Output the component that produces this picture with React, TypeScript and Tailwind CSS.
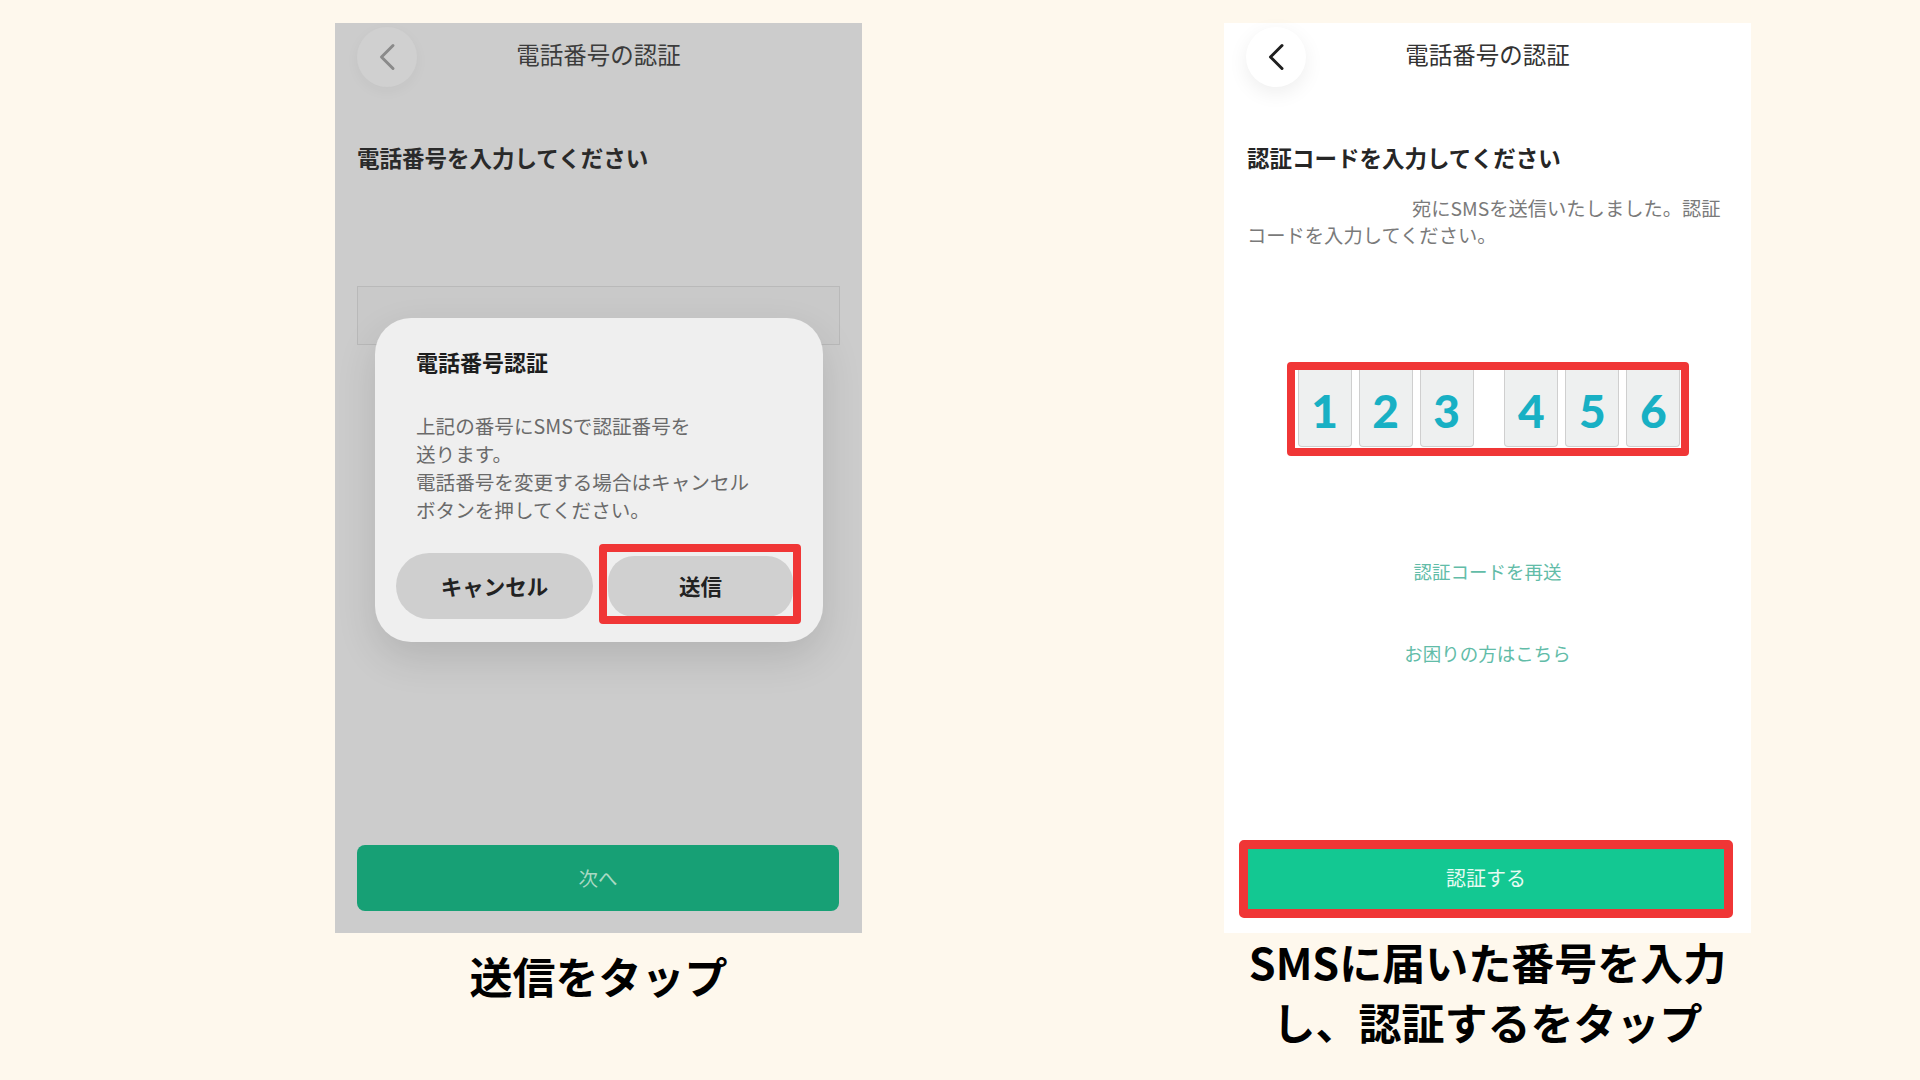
const jp = "font-['Noto_Sans_CJK_JP','Noto_Sans',sans-serif]";

function BackButton({ dimmed }: { dimmed?: boolean }) {
  return (
    <div
      className={
        dimmed
          ? 'flex h-[60px] w-[60px] items-center justify-center rounded-full bg-[#d0d0d0] shadow-[0_4px_14px_rgba(0,0,0,0.04)]'
          : 'flex h-[60px] w-[60px] items-center justify-center rounded-full bg-white shadow-[0_6px_20px_rgba(0,0,0,0.07)]'
      }
    >
      <svg width="18" height="28" viewBox="0 0 18 28" fill="none">
        <path
          d="M15 2.5 L3.5 14 L15 25.5"
          stroke={dimmed ? '#8a8a8a' : '#1f1f1f'}
          strokeWidth="3"
          strokeLinecap="round"
          strokeLinejoin="round"
        />
      </svg>
    </div>
  );
}

function Header({ dimmed }: { dimmed?: boolean }) {
  return (
    <div className="relative flex h-[64px] items-center px-[22px] pt-[3px]">
      <BackButton dimmed={dimmed} />
      <div
        className={`absolute inset-x-0 top-[14px] text-center text-[23.5px] leading-[34px] ${
          dimmed ? 'text-[#3c3c3c]' : 'text-[#333]'
        }`}
      >
        電話番号の認証
      </div>
    </div>
  );
}

function PhoneEntryScreen() {
  return (
    <div className="relative h-[910px] w-[527px] bg-[#cccccc]">
      <Header dimmed />
      <h2 className="mt-[53px] px-[22px] text-[22.5px] font-bold leading-[34px] text-[#2a2a2a]">
        電話番号を入力してください
      </h2>
      <div className="mx-[22px] mt-[112px] h-[59px] border border-[#b9b9b9] bg-[#c9c9c9]" />

      {/* confirm dialog */}
      <div className="absolute left-[40px] top-[295px] h-[324px] w-[448px] rounded-[36px] bg-[#efefef] shadow-[0_16px_40px_rgba(0,0,0,0.12)]">
        <div className="px-[41px] pt-[27px] text-[22px] font-bold leading-[32px] text-[#1e1e1e]">
          電話番号認証
        </div>
        <p className="mt-[35px] px-[41px] text-[19.6px] leading-[28px] text-[#6a6a6a]">
          上記の番号にSMSで認証番号を
          <br />
          送ります。
          <br />
          電話番号を変更する場合はキャンセル
          <br />
          ボタンを押してください。
        </p>
        <div className="absolute left-[21px] top-[235px] flex items-center gap-[15px]">
          <button className="h-[66px] w-[197px] rounded-full bg-[#cfcfcf] text-[21.5px] font-bold text-[#222]">
            キャンセル
          </button>
          <button className="h-[61px] w-[185px] rounded-[26px] bg-[#d0d0d0] text-[21.5px] font-bold text-[#222]">
            送信
          </button>
        </div>
        <div className="absolute left-[224px] top-[226px] h-[80px] w-[202px] rounded-[4px] border-[8px] border-[#f03636]" />
      </div>

      <button className="absolute bottom-[22px] left-[22px] h-[66px] w-[482px] rounded-[8px] bg-[#17a075] text-[19.5px] text-[#a9d9c3]">
        次へ
      </button>
    </div>
  );
}

const digits = ['1', '2', '3', '4', '5', '6'];

function CodeBox({ value }: { value: string }) {
  return (
    <div className="flex h-[77px] w-[55px] items-center justify-center rounded-b-[4px] border-x border-b border-[#cfcfcf] bg-[#eef0f0] pt-[4px] font-['Lato',sans-serif] text-[46px] font-black text-[#18b0c4]">
      {value}
    </div>
  );
}

function CodeScreen() {
  return (
    <div className="relative h-[910px] w-[527px] bg-white">
      <Header />
      <h2 className="mt-[53px] px-[23px] text-[22.5px] font-bold leading-[34px] text-[#262626]">
        認証コードを入力してください
      </h2>
      <p className="mt-[21px] whitespace-nowrap px-[23px] text-[19.3px] leading-[27px] text-[#7a7a7a]">
        <span className="inline-block w-[165px]" />
        宛にSMSを送信いたしました。認証
        <br />
        コードを入力してください。
      </p>

      <div className="mx-auto mt-[113px] flex h-[94px] w-[402px] gap-[7px] rounded-[4px] border-[8px] border-[#f03636] pl-[3px]">
        {digits.slice(0, 3).map((d) => (
          <CodeBox key={d} value={d} />
        ))}
        <div className="w-[17px]" />
        {digits.slice(3).map((d) => (
          <CodeBox key={d} value={d} />
        ))}
      </div>

      <div className="mt-[101px] text-center text-[18.5px] leading-[28px] text-[#62bca8]">認証コードを再送</div>
      <div className="mt-[54px] text-center text-[18.5px] leading-[28px] text-[#62bca8]">お困りの方はこちら</div>

      <div className="absolute left-[15px] top-[817px] flex h-[78px] w-[494px] items-center justify-center rounded-[5px] border-[9px] border-[#f03636] bg-[#13c892] pb-[2px] text-[20px] text-[#e6fbf2]">
        認証する
      </div>
    </div>
  );
}

export default function App() {
  return (
    <main className={`min-h-screen w-full bg-[#fef8ed] ${jp}`}>
      <div className="flex gap-[362px] pl-[335px] pt-[23px]">
        <section className="flex w-[527px] flex-col">
          <PhoneEntryScreen />
          <p className="mt-[16px] text-center text-[43px] font-bold leading-[52px] text-black">送信をタップ</p>
        </section>
        <section className="flex w-[527px] flex-col">
          <CodeScreen />
          <p className="-mt-[2px] text-center text-[43px] font-bold leading-[60px] text-black">
            SMSに届いた番号を入力
            <br />
            し、認証するをタップ
          </p>
        </section>
      </div>
    </main>
  );
}
